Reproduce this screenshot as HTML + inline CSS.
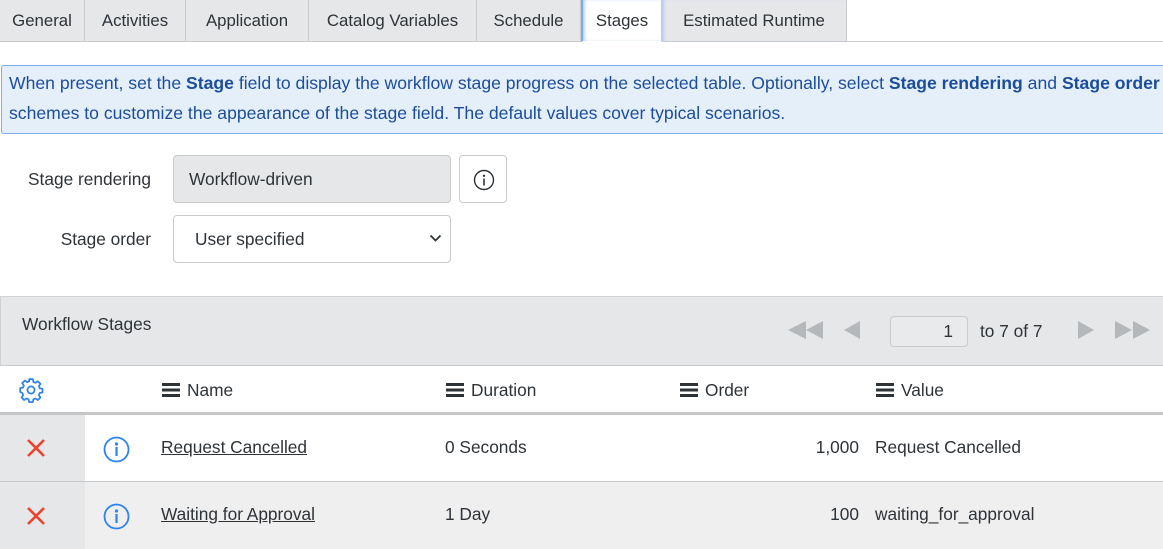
<!DOCTYPE html>
<html><head><style>
*{box-sizing:border-box;margin:0;padding:0}
body{width:1163px;height:549px;overflow:hidden;background:#fff;font-family:"Liberation Sans",sans-serif;font-size:16px;color:#2e3338;position:relative}
.a{position:absolute}
.tab{position:absolute;top:0;height:42px;background:#e6e7e9;border-right:1px solid #c8cacc;border-bottom:1px solid #c8cacc;line-height:42px;text-align:center;color:#2e3338;font-size:16.8px}
.ham{display:inline-block;width:18px;height:14px;vertical-align:-1px;margin-right:7px;background:linear-gradient(#2e3338 0 3px,transparent 3px 5.5px,#2e3338 5.5px 8.5px,transparent 8.5px 11px,#2e3338 11px 14px)}
.th{position:absolute;top:366px;height:48px;line-height:48px;font-size:17.3px;color:#2e3338}
.x{position:absolute;left:25px;width:22px;height:22px}
.u{text-decoration:underline}
.r{position:absolute;font-size:17.3px}
</style></head><body>
<div class="a" style="left:0;top:41px;width:1163px;height:1px;background:#c8cacc"></div>
<div class="tab" style="left:0;width:85px">General</div>
<div class="tab" style="left:85px;width:101px">Activities</div>
<div class="tab" style="left:186px;width:123px">Application</div>
<div class="tab" style="left:309px;width:168px">Catalog Variables</div>
<div class="tab" style="left:477px;width:104px">Schedule</div>
<div class="tab" style="left:581px;width:81px;background:#fff;border-bottom:1px solid #fff;border-left:2px solid #7aaaf0;box-shadow:inset 3px 0 4px -2px #9cc0f5">Stages</div>
<div class="tab" style="left:662px;width:185px;box-shadow:inset 4px 0 4px -3px #9cc0f5">Estimated Runtime</div>

<div class="a" style="left:1px;top:65px;width:1170px;height:69px;background:#e5effa;border:1px solid #7fadea;border-radius:3px;color:#1b4d9b;font-size:17.6px;line-height:30px;padding:2px 0 0 7px;white-space:nowrap;overflow:hidden">When present, set the <b>Stage</b> field to display the workflow stage progress on the selected table. Optionally, select <b>Stage rendering</b> and <b>Stage order</b><br>schemes to customize the appearance of the stage field. The default values cover typical scenarios.</div>

<div class="a" style="left:0;width:151px;top:155px;line-height:48px;text-align:right;font-size:17.3px">Stage rendering</div>
<div class="a" style="left:173px;top:155px;width:278px;height:48px;background:#e6e7e9;border:1px solid #c8cacc;border-radius:4px;line-height:46px;padding-left:15px;font-size:17.3px">Workflow-driven</div>
<div class="a" style="left:459px;top:155px;width:48px;height:48px;border:1px solid #c8cacc;border-radius:4px">
<svg class="a" style="left:13px;top:13px" width="22" height="22" viewBox="0 0 22 22"><circle cx="11" cy="11" r="9.5" fill="none" stroke="#2e3338" stroke-width="1.4"/><circle cx="11" cy="6.8" r="1.2" fill="#2e3338"/><rect x="10.2" y="9.5" width="1.6" height="7" fill="#2e3338"/></svg></div>
<div class="a" style="left:0;width:151px;top:215px;line-height:48px;text-align:right;font-size:17.3px">Stage order</div>
<div class="a" style="left:173px;top:215px;width:278px;height:48px;border:1px solid #c8cacc;border-radius:4px;line-height:46px;padding-left:21px;font-size:17.3px">User specified
<svg class="a" style="left:255px;top:18px" width="13" height="9" viewBox="0 0 13 9"><path d="M1.5 1.5 L6.5 6.5 L11.5 1.5" fill="none" stroke="#2e3338" stroke-width="1.8"/></svg></div>

<div class="a" style="left:0;top:296px;width:1163px;height:70px;background:#e6e7e9;border-top:1px solid #d0d2d4;border-bottom:1px solid #c8cacc;border-left:1px solid #d0d2d4"></div>
<div class="a" style="left:22px;top:312px;font-size:17.3px;line-height:24px">Workflow Stages</div>
<svg class="a" style="left:786px;top:320px" width="40" height="20"><path d="M2 10 L20 1 V19Z M20 10 L37 1 V19Z" fill="#b5b8bb"/></svg>
<svg class="a" style="left:843px;top:320px" width="20" height="20"><path d="M1 10 L17 1 V19Z" fill="#b5b8bb"/></svg>
<div class="a" style="left:890px;top:316px;width:78px;height:31px;border:1px solid #c8cacc;border-radius:4px;background:#e9eaeb;text-align:right;padding-right:14px;line-height:29px;font-size:17.3px">1</div>
<div class="a" style="left:980px;top:316px;line-height:31px;font-size:17.3px">to 7 of 7</div>
<svg class="a" style="left:1076px;top:320px" width="20" height="20"><path d="M2 1 L18 10 L2 19Z" fill="#b5b8bb"/></svg>
<svg class="a" style="left:1114px;top:320px" width="40" height="20"><path d="M1 1 L18 10 L1 19Z M19 1 L36 10 L19 19Z" fill="#b5b8bb"/></svg>

<svg class="a" style="left:18px;top:377px" width="26" height="26" viewBox="0 0 24 24"><path d="M10.3 2h3.4l.5 2.6 1.9.8 2.2-1.5 2.4 2.4-1.5 2.2.8 1.9 2.6.5v3.4l-2.6.5-.8 1.9 1.5 2.2-2.4 2.4-2.2-1.5-1.9.8-.5 2.6h-3.4l-.5-2.6-1.9-.8-2.2 1.5-2.4-2.4 1.5-2.2-.8-1.9L2 13.7v-3.4l2.6-.5.8-1.9-1.5-2.2 2.4-2.4 2.2 1.5 1.9-.8z" fill="none" stroke="#2c84ee" stroke-width="1.6" stroke-linejoin="round"/><circle cx="12" cy="12" r="3.3" fill="none" stroke="#2c84ee" stroke-width="1.6"/></svg>
<div class="th" style="left:162px"><span class="ham"></span>Name</div>
<div class="th" style="left:446px"><span class="ham"></span>Duration</div>
<div class="th" style="left:680px"><span class="ham"></span>Order</div>
<div class="th" style="left:876px"><span class="ham"></span>Value</div>
<div class="a" style="left:0;top:412px;width:1163px;height:3px;background:#c4c6c8"></div>

<div class="a" style="left:0;top:415px;width:1163px;height:66px;background:#fff"></div>
<div class="a" style="left:0;top:415px;width:85px;height:134px;background:#e6e7e9"></div>
<div class="a" style="left:0;top:481px;width:1163px;height:1px;background:#c8cacc"></div>
<div class="a" style="left:85px;top:482px;width:1078px;height:67px;background:#efeff0"></div>

<svg class="x" style="top:437px" viewBox="0 0 22 22"><path d="M3 3 L19 19 M19 3 L3 19" stroke="#f0412c" stroke-width="2.6"/></svg>
<svg class="x" style="top:505px" viewBox="0 0 22 22"><path d="M3 3 L19 19 M19 3 L3 19" stroke="#f0412c" stroke-width="2.6"/></svg>
<svg class="a" style="left:103px;top:436px" width="27" height="27" viewBox="0 0 27 27"><circle cx="13.5" cy="13.5" r="12" fill="none" stroke="#2c84ee" stroke-width="1.8"/><circle cx="13.5" cy="8" r="1.6" fill="#2c84ee"/><rect x="12.4" y="11" width="2.2" height="9" fill="#2c84ee"/></svg>
<svg class="a" style="left:103px;top:503px" width="27" height="27" viewBox="0 0 27 27"><circle cx="13.5" cy="13.5" r="12" fill="none" stroke="#2c84ee" stroke-width="1.8"/><circle cx="13.5" cy="8" r="1.6" fill="#2c84ee"/><rect x="12.4" y="11" width="2.2" height="9" fill="#2c84ee"/></svg>

<div class="r u" style="left:161px;top:437px">Request Cancelled</div>
<div class="r" style="left:445px;top:437px">0 Seconds</div>
<div class="r" style="left:700px;width:159px;text-align:right;top:437px">1,000</div>
<div class="r" style="left:875px;top:437px">Request Cancelled</div>
<div class="r u" style="left:161px;top:504px">Waiting for Approval</div>
<div class="r" style="left:445px;top:504px">1 Day</div>
<div class="r" style="left:700px;width:159px;text-align:right;top:504px">100</div>
<div class="r" style="left:875px;top:504px">waiting_for_approval</div>
</body></html>
